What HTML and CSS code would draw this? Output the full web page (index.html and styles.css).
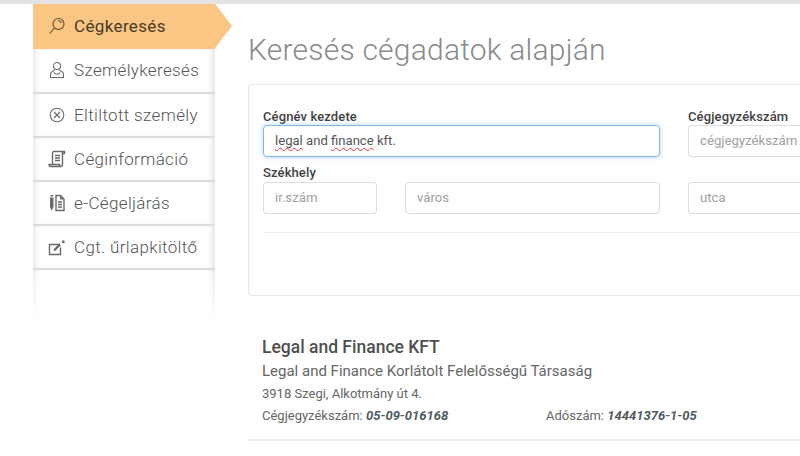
FILE: index.html
```html
<!DOCTYPE html>
<html lang="hu">
<head>
<meta charset="utf-8">
<title>Keresés cégadatok alapján</title>
<link rel="stylesheet" href="styles.css">
</head>
<body>
<div class="topbar"></div>
<div class="page">
  <nav class="side">
    <a class="item active">
      <svg class="ico" viewBox="0 0 18 18"><circle cx="10.500" cy="7" r="5.500"/><path d="M6.500 11 1.500 16.500M10 3.800A3.200 3.200 0 0 1 13.500 6"/></svg>
      <span>Cégkeresés</span>
    </a>
    <a class="item first">
      <svg class="ico" viewBox="0 0 18 18"><circle cx="9" cy="5" r="3.500"/><path d="M6.500 8.500C6.500 10.500 2.500 10 2.500 13V16.500H15.500V13C15.500 10 11.500 10.500 11.500 8.500M6 11.500C7 13.800 11 13.800 12 11.500"/></svg>
      <span>Személykeresés</span>
    </a>
    <a class="item">
      <svg class="ico" viewBox="0 0 18 18"><circle cx="9" cy="9" r="6.800"/><path d="M6 6l6 6M12 6l-6 6"/></svg>
      <span>Eltiltott személy</span>
    </a>
    <a class="item">
      <svg class="ico" viewBox="0 0 18 18"><path class="med" d="M4.500 14V3.500C4.500 2 5 1.500 6 1.500H16.500V3.500H14.500M14.500 1.500V14.500C14.500 16 14 16.500 13 16.500H2.500C1.500 16.500 1 15.800 1 14.500H11.500C11.500 15.500 12 16.500 13 16.500M7 5.500H12M7 8H12M7 10.500H12"/></svg>
      <span>Céginformáció</span>
    </a>
    <a class="item">
      <svg class="ico" viewBox="0 0 18 18"><path class="solid" d="M2 3.500h3.500v9.500L3.750 16.800 2 13zM2.500 1h2.500v1.600H2.500z"/><path class="med" d="M8 1.500h4.500l3.500 3.500v11.500H8zM10 8h4M10 10.500h4M10 13h4"/><path class="solid" d="M12 1.500v4h4z"/></svg>
      <span>e-Cégeljárás</span>
    </a>
    <a class="item">
      <svg class="ico" viewBox="0 0 18 18"><path class="med" d="M12 6.500H1.500V16.500H12.500V9.500"/><path class="thick" d="M6 12.500 12 6.500"/><path class="solid" d="M14 2.500h2.500v2.500H14z"/></svg>
      <span>Cgt. űrlapkitöltő</span>
    </a>
    <div class="fade"></div>
  </nav>
  <main class="main">
    <h1 class="title">Keresés cégadatok alapján</h1>
    <section class="panel">
      <div class="row">
        <label class="field wide">
          <span class="lab">Cégnév kezdete</span>
          <span class="input focus"><span class="typed"><u>legal</u> and <u>finance</u> kft.</span></span>
        </label>
        <label class="field end">
          <span class="lab">Cégjegyzékszám</span>
          <span class="input ph cut">cégjegyzékszám</span>
        </label>
      </div>
      <div class="lab seat">Székhely</div>
      <div class="row">
        <span class="input ph zip">ir.szám</span>
        <span class="input ph city">város</span>
        <span class="input ph cut end">utca</span>
      </div>
      <div class="rule"></div>
    </section>
    <article class="result">
      <h2 class="name">Legal and Finance KFT</h2>
      <p class="long">Legal and Finance Korlátolt Felelősségű Társaság</p>
      <p class="small addr">3918 Szegi, Alkotmány út 4.</p>
      <p class="small ids"><span class="reg">Cégjegyzékszám: <b>05-09-016168</b></span><span>Adószám: <b>14441376-1-05</b></span></p>
    </article>
  </main>
</div>
</body>
</html>
```
FILE: styles.css
```css
* { box-sizing: border-box; }
html, body { margin: 0; height: 456px; overflow: hidden; background: #fff; }
body { font-family: Roboto, "Liberation Sans", sans-serif; color: #555; }
.topbar { height: 4px; background: #e4e4e4; }
.page { display: flex; padding-left: 33px; width: 800px; }
.side { width: 182px; flex: none; position: relative; }
.item { display: flex; align-items: center; height: 44px; padding-left: 15px; gap: 8px; font-size: 17px; font-weight: 300; color: #555; background: #fff; border-bottom: 2px solid #dcdcdc; box-shadow: inset 6px 0 6px -4px #e6e6e6, inset -6px 0 6px -4px #e0e0e0; letter-spacing: .36px; }
.item.first { height: 45px; padding-bottom: 1px; }
.item.active { position: relative; height: 45px; padding-bottom: 1px; background: #fbc683; color: #4a3a28; font-weight: 400; border: 0; box-shadow: none; }
.item.active::after { content: ""; position: absolute; left: 100%; top: 0; border-style: solid; border-width: 22.500px 0 22.500px 17px; border-color: transparent transparent transparent #fbc683; }
.ico { width: 18px; height: 18px; flex: none; fill: none; stroke: #6a6a6a; stroke-width: 1.1; }
.active .ico { stroke: #5c4a34; }
.ico .solid { fill: #6a6a6a; stroke: none; }
.ico .thick { stroke-width: 2.400; }
.ico .med { stroke-width: 1.400; }
.fade { height: 51px; background: #fff; box-shadow: inset 6px 0 6px -4px #e6e6e6, inset -6px 0 6px -4px #e0e0e0; -webkit-mask-image: linear-gradient(#000, transparent); mask-image: linear-gradient(#000, transparent); }
.main { flex: 1; min-width: 0; margin-left: 33px; }
.title { margin: 28px 0 0; height: 52px; font-size: 30px; line-height: 36px; font-weight: 300; color: #8a8a8a; letter-spacing: .22px; }
.panel { height: 212px; border: 1px solid #e8e8e8; border-right: 0; border-radius: 4px 0 0 4px; padding: 24px 0 0 14px; }
.row { display: flex; align-items: flex-end; }
.field { display: flex; flex-direction: column; }
.field.wide { width: 397px; margin-right: 28px; flex: none; }
.field.end { flex: 1; min-width: 0; }
.lab { font-size: 13px; line-height: 15px; font-weight: 500; color: #3f3f3f; margin-bottom: 1px; display: block; letter-spacing: .12px; }
.seat { margin-top: 8px; margin-bottom: 2px; }
.input { display: flex; align-items: center; height: 32px; border: 1px solid #ddd; border-radius: 4px; padding: 0 11px; font-size: 13.200px; color: #555; }
.typed { padding-bottom: 2px; font-size: 13.100px; }
.ph { color: #a0a0a0; padding-bottom: 1px; }
.input.cut { border-right: 0; border-radius: 4px 0 0 4px; padding-right: 0; }
.input.focus { border-color: #86b7de; box-shadow: 0 0 5px rgba(102,175,233,.55); }
u { text-decoration: underline wavy #d33; text-decoration-thickness: 1px; text-underline-offset: 2px; text-decoration-skip-ink: none; }
.zip { width: 114px; margin-right: 28px; flex: none; }
.city { width: 255px; margin-right: 28px; flex: none; }
.input.end { flex: 1; min-width: 0; }
.rule { margin-top: 18px; height: 1px; background: #eee; }
.result { height: 145px; padding: 41px 0 0 14px; border-bottom: 2px solid #eee; }
.name { margin: 0; font-size: 17.500px; line-height: 21px; font-weight: 500; color: #4f4f4f; }
.long { margin: 3px 0 0; font-size: 15px; line-height: 20px; color: #666; }
.small { margin: 0; font-size: 13px; line-height: 22px; color: #666; }
.addr { margin-top: 2px; }
.ids { display: flex; }
.reg { width: 284px; }
.ids b { font-style: italic; font-weight: 700; color: #4f5a60; }
```
